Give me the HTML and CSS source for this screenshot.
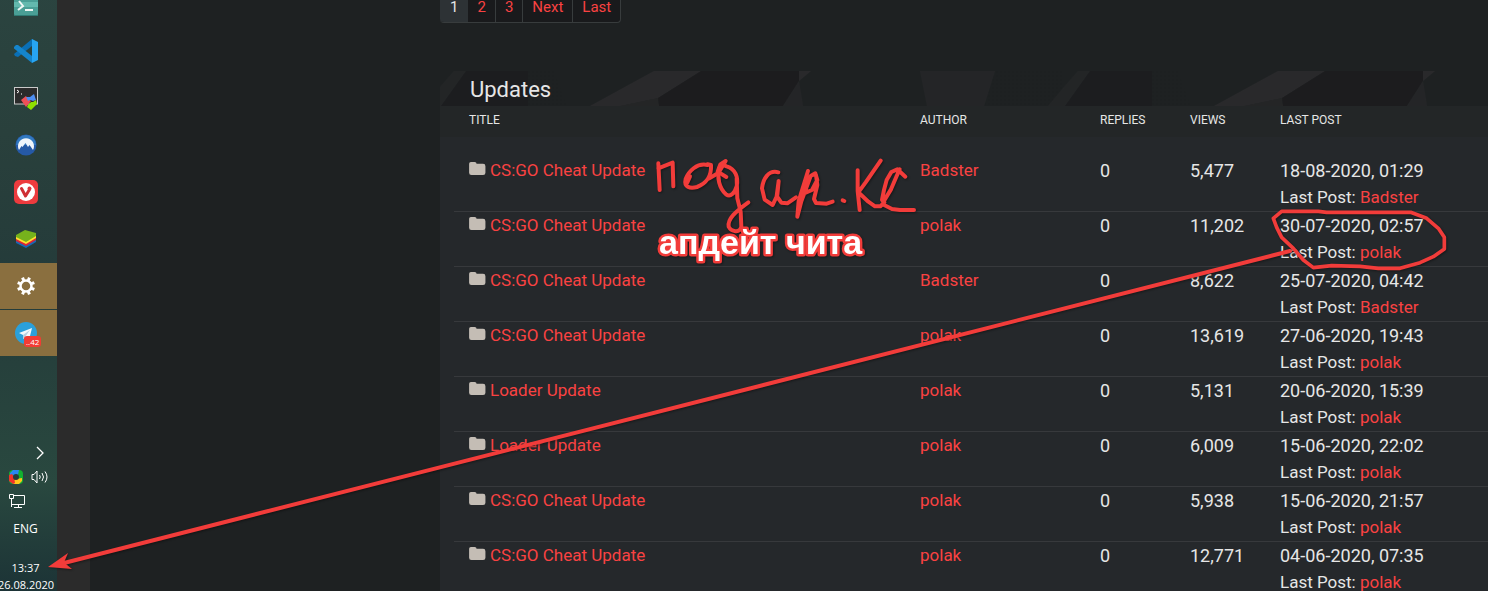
FILE: index.html
```html
<!DOCTYPE html>
<html lang="en">
<head>
    <meta charset="UTF-8">
    <meta name="viewport" content="width=device-width, initial-scale=1.0">
    <title>Updates</title>
    <link rel="stylesheet" href="styles.css">
</head>
<body>
    <!-- taskbar -->
    <aside class="taskbar">
        <div class="app">
            <svg width="24" height="24" viewBox="0 0 24 24"><rect width="24" height="24" rx="2" fill="#4a9f96"/><path d="M0 10h24v5H0z" fill="#63b9ae"/><path d="M0 23h24v1H0z" fill="#2f7b74"/><path d="M5 9l4 5-5 4M11 18h8" fill="none" stroke="#eef6f4" stroke-width="2"/></svg>
        </div>
        <div class="app">
            <svg width="24" height="24" viewBox="0 0 24 24"><path d="M18 0v7L4 18 1 17 0 15z" fill="#0a6fb5"/><path d="M0 8l2-2 2 0 14 11v7L0 9.500z" fill="#1585cc"/><path d="M18 0l6 3v18l-6 3z" fill="#27a5f3"/></svg>
        </div>
        <div class="app">
            <svg width="24" height="24" viewBox="0 0 24 24"><rect x=".5" y="1.500" width="23" height="16.500" fill="#2b2b2b" stroke="#c9c9c9"/><path d="M3 4l2 1.500L3 7M7 8h1" stroke="#fff" fill="none"/><path d="M7 14l5-4 2 3 3 2-5 6z" fill="#ee4f57"/><path d="M12 11l4 0 4-3 2 6-3 1-3-1-2 1z" fill="#4d8df0"/><path d="M14 19l3-3 2 0 3-2 1 4-6 6-4-3z" fill="#8fe000"/></svg>
        </div>
        <div class="app">
            <svg width="22" height="22" viewBox="0 0 22 22"><circle cx="11" cy="11" r="10.500" fill="#2559a6"/><path d="M1 11a10 10 0 0 1 20 0z" fill="#3279c0"/><path d="M4 16A8 8 0 1 1 18 16l-3.500-5-1.500 2-2.500-4-3 4-1-1z" fill="#eef4fb"/></svg>
        </div>
        <div class="app">
            <svg width="24" height="24" viewBox="0 0 24 24"><rect width="24" height="24" rx="5" fill="#ed3b3e"/><circle cx="12" cy="12" r="9" fill="#fff"/><path d="M7.500 8.500l4 7.500 4-6.500" fill="none" stroke="#cf2f35" stroke-width="3" stroke-linecap="round" stroke-linejoin="round"/><circle cx="15.500" cy="8.500" r="2" fill="#d9383d"/></svg>
        </div>
        <div class="app">
            <svg width="22" height="20" viewBox="0 0 22 20"><path d="M1 11v3l10 5 10-6v-3z" fill="#1768b5"/><path d="M1 9v3l10 5 10-6V8z" fill="#dc2436"/><path d="M1 7v3l10 5 10-6V6z" fill="#ffe02e"/><path d="M1 6l9-5 11 3v3l-10 6L1 8z" fill="#76b21c"/></svg>
        </div>
        <div class="app active">
            <svg width="20" height="20" viewBox="0 0 20 20"><circle cx="10" cy="10" r="5.500" fill="none" stroke="#fff" stroke-width="2.500"/><g stroke="#fff" stroke-width="3"><path d="M10 1v3M10 16v3M1 10h3M16 10h3" transform="rotate(22.500 10 10)"/><path d="M10 1v3M10 16v3M1 10h3M16 10h3" transform="rotate(67.500 10 10)"/></g></svg>
        </div>
        <div class="app active">
            <svg width="22" height="22" viewBox="0 0 22 22"><circle cx="11" cy="11" r="11" fill="#2ba0da"/><path d="M4 11l13-5-3 12-4-3-2 2v-4z" fill="#f4f8fb"/><path d="M8 13l7-5-5 7-2 2z" fill="#b8d0e0"/></svg>
            <span class="badge">..42</span>
        </div>

        <!-- tray and clock -->
        <div class="tray">
            <div class="tray-row right">
                <svg width="8" height="14" viewBox="0 0 8 14"><path d="M1 1l6 6-6 6" fill="none" stroke="#fff" stroke-width="1.300"/></svg>
            </div>
            <div class="tray-row">
                <svg width="14" height="14" viewBox="0 0 14 14"><rect width="14" height="14" rx="4" fill="#12b030"/><path d="M7 5L1 6V3l3-3h6l-1 5z" fill="#2a86f0"/><path d="M7 9l6-1v3l-3 3H4l1-4z" fill="#ffc51b"/><path d="M5 7l1 6-2 1-4-3V5l3-1z" fill="#f0322a"/><circle cx="7" cy="7" r="3" fill="#263b3a"/></svg>
                <svg width="17" height="14" viewBox="0 0 17 14"><path d="M1 4.500h2L6 1v12L3 9.500H1zM8.500 5q1.500 2 0 4M11 3q3 4 0 8M14 1.500q4 5.500 0 11" fill="none" stroke="#fff"/></svg>
            </div>
            <div class="tray-row">
                <svg width="16" height="14" viewBox="0 0 16 14"><path d="M5 1.500h10.500v9H2.500V6M9.500 10v3M5 13.500h8M.5.500h4v4h-4zM2.500 4v9" fill="none" stroke="#fff"/></svg>
            </div>
            <div class="lang">ENG</div>
            <div class="clock">13:37<br>26.08.2020</div>
        </div>
    </aside>
    <div class="window-edge"></div>

    <!-- forum page -->
    <main class="page">
        <nav class="pagination">
            <span class="current">1</span>
            <a href="#">2</a>
            <a href="#">3</a>
            <a href="#">Next</a>
            <a href="#">Last</a>
        </nav>

        <section class="panel">
            <header class="panel-title">
                <svg class="panel-art" width="100%" height="35">
                    <defs>
                        <pattern id="dots" width="4" height="4" patternUnits="userSpaceOnUse"><rect width="2" height="2" fill="#1d2021"/></pattern>
                        <pattern id="shards" width="624" height="35" patternUnits="userSpaceOnUse">
                            <path d="M88 0h26l13 35H88zM555 0h69v35h-80z" fill="url(#dots)"/>
                            <path d="M14 0h12L1 35H0V16z" fill="#232526"/>
                            <path d="M26 0h62v35H1z" fill="#1c1d1f"/>
                            <path d="M214 0h47l-43 27-38 8h-30z" fill="#29292b"/>
                            <path d="M218 27l1 8h-39z" fill="#242526"/>
                            <path d="M261 0h98v10l-16 25H219l-1-8z" fill="#1c1c1e"/>
                            <path d="M359 0h12l-12 10z" fill="#29292b"/>
                            <path d="M359 10l4 25h-20z" fill="#242527"/>
                            <path d="M480 0h75l-11 35h-57z" fill="#242527"/>
                            <path d="M624 16v19h-16z" fill="#232526"/>
                        </pattern>
                    </defs>
                    <rect width="100%" height="35" fill="url(#shards)"/>
                </svg>
                <h2>Updates</h2>
            </header>
            <div class="panel-body">
                <table class="threads">
                    <thead>
                        <tr>
                            <th class="col-title">TITLE</th>
                            <th class="col-author">AUTHOR</th>
                            <th class="col-count">REPLIES</th>
                            <th class="col-count">VIEWS</th>
                            <th>LAST POST</th>
                        </tr>
                    </thead>
                    <tbody id="threads"></tbody>
                </table>
            </div>
        </section>
    </main>

    <!-- pen marks -->
    <svg class="marks" width="1488" height="591" viewBox="0 0 1488 591">
        <path d="M1290 251L64 563" fill="none" stroke="#f23c3a" stroke-width="4" stroke-linecap="round"/>
        <path d="M48 567l20-14-4 9.500 8 6.500z" fill="#f23c3a"/>
        <svg x="1160" y="150" width="328" height="180" viewBox="0 0 984 540">
            <path d="M340 205l25-21h110l25 3h252l48 18 35 30 18 27v35l-33 23-40 18-60 17h-65l-55-6-85-2-55 6-30-23-30-35-35-33-15-30z" fill="none" stroke="#f23c3a" stroke-width="11" stroke-linejoin="round"/>
        </svg>
        <svg x="640" y="145" width="300" height="125" viewBox="0 0 900 375">
            <g fill="none" stroke="#f23c3a" stroke-width="12" stroke-linecap="round" stroke-linejoin="round">
                <path d="M55 55l4 80M55 70l43-17 2 71"/>
                <path d="M203 60c-32-8-58 20-66 42-6 24 12 30 34 24 28-10 44-34 42-66l-10-2M150 94l-8 18"/>
                <path d="M208 100l27-16 22-36-16 10-8 22 26 16"/>
                <path d="M238 68c-8 30 0 62 20 80 14 10 26-4 32-24 6-28-4-52-30-60l-10-4M290 100l2 60 10 40 2 45c-4 20-30 16-38 0-4-24 22-46 59-73"/>
                <path d="M415 82c-30-8-46 20-49 48l8 34 24 16 14-30 4-42-6 45 14 20 18 2 26-18"/>
                <path d="M504 78l-28 90-4 47 12-46 28-76 14-8 6 20-16 30-24 10M528 90l4 30-10 42 6 12 32 2 18-6M608 166l5 2"/>
                <path d="M653 76v62l6 57M722 47l-45 65-22 30 30 28 20 14 16 0 12-12"/>
                <path d="M796 95l-24-22-18 8-14 24-8 30-6 30 5 4 22-36 18-42 8-18M728 178l28 14 24 3h42"/>
            </g>
        </svg>
        <text class="caption" x="659" y="254">апдейт чита</text>
    </svg>

    <script>
        const threads = [
            ['CS:GO Cheat Update', 'Badster', '5,477', '18-08-2020, 01:29'],
            ['CS:GO Cheat Update', 'polak', '11,202', '30-07-2020, 02:57'],
            ['CS:GO Cheat Update', 'Badster', '8,622', '25-07-2020, 04:42'],
            ['CS:GO Cheat Update', 'polak', '13,619', '27-06-2020, 19:43'],
            ['Loader Update', 'polak', '5,131', '20-06-2020, 15:39'],
            ['Loader Update', 'polak', '6,009', '15-06-2020, 22:02'],
            ['CS:GO Cheat Update', 'polak', '5,938', '15-06-2020, 21:57'],
            ['CS:GO Cheat Update', 'polak', '12,771', '04-06-2020, 07:35']
        ];
        const folder = '<svg class="folder" width="17" height="14" viewBox="0 0 18 15"><path d="M2 0h4q2 0 2 2h7q2.500 0 2.500 2.500v7q0 2.500-2.500 2.500H2.500Q0 14 0 11.500V2Q0 0 2 0z" fill="#c4bdb5"/></svg>';

        document.getElementById('threads').innerHTML = threads.map(([title, author, views, date]) => `
            <tr>
                <td>${folder}<a href="#">${title}</a></td>
                <td><a href="#">${author}</a></td>
                <td><div class="num">0</div></td>
                <td><div class="num">${views}</div></td>
                <td><div class="num">${date}</div>Last Post: <a href="#">${author}</a></td>
            </tr>`).join('');
    </script>
</body>
</html>
```
FILE: styles.css
```css
* {
    box-sizing: border-box;
}
body {
    margin: 0;
    height: 100vh;
    display: flex;
    overflow: hidden;
    position: relative;
    background-color: #1e2122;
    color: #e6e6e6;
    font-family: Roboto, "Liberation Sans", sans-serif;
}
a {
    color: #f94242;
    text-decoration: none;
}

/* taskbar */
.taskbar {
    flex: none;
    width: 57px;
    height: calc(100vh + 21px);
    display: flex;
    flex-direction: column;
    gap: 1px;
    margin-top: -19px;
    background: linear-gradient(#2b4440, #29403c 25%, #243b3a 50%, #29483f 82%, #1c3336);
    color: #fff;
    font-family: "Open Sans", "Noto Sans", sans-serif;
}
.app {
    flex: none;
    height: 46px;
    padding-right: 5px;
    display: flex;
    align-items: center;
    justify-content: center;
    position: relative;
}
.app.active {
    background-color: #8a6f3f;
}
.badge {
    position: absolute;
    left: 24px;
    bottom: 9px;
    padding: 0 2px;
    border-radius: 3px;
    background-color: #f23c34;
    font-size: 8px;
    line-height: 11px;
}
.tray {
    margin-top: auto;
    text-align: center;
}
.tray-row {
    height: 24px;
    padding: 0 8px 0 9px;
    display: flex;
    align-items: center;
    gap: 8px;
}
.tray-row.right {
    justify-content: flex-end;
    padding-right: 13px;
}
.lang {
    padding: 4px 6px 18px 0;
    font-size: 12px;
    line-height: 24px;
}
.clock {
    margin: 0 4px 0 -2px;
    font-size: 11px;
    line-height: 17px;
}
.window-edge {
    flex: none;
    width: 33px;
    background-color: #2b2b2b;
}

/* forum */
.page {
    flex: 1;
    padding-left: 350px;
}
.pagination {
    display: flex;
    width: fit-content;
    margin: -9px 0 48px;
    border: 1px solid #383c3d;
    border-left: 0;
    border-radius: 4px;
    overflow: hidden;
    background-color: #191a1c;
    font-size: 15px;
    line-height: 30px;
}
.pagination a,
.pagination span {
    padding: 0 9px;
    border-right: 1px solid #383c3d;
}
.pagination a:last-child {
    border-right: 0;
}
.pagination .current {
    padding: 0 10px;
    border-right: 0;
    background-color: #2d3235;
}
.panel-title {
    position: relative;
    height: 35px;
    padding-left: 30px;
}
.panel-title h2 {
    position: relative;
    margin: 0;
    font-size: 22px;
    font-weight: 400;
    line-height: 37px;
}
.panel-art {
    position: absolute;
    left: 0;
    top: 0;
}
.panel-body {
    padding-left: 14px;
    background: linear-gradient(#232627 31px, #25282b 31px);
}
.threads {
    width: 100%;
    table-layout: fixed;
    border-collapse: separate;
    border-spacing: 0;
}
.threads th {
    height: 31px;
    padding: 0 15px;
    font-size: 12px;
    font-weight: 400;
    line-height: 28px;
    text-align: left;
    vertical-align: top;
}
.threads tbody::before {
    content: "";
    display: block;
    height: 20px;
}
.threads td {
    height: 55px;
    padding: 0 15px;
    border-bottom: 1px solid #37393c;
    font-size: 17px;
    line-height: 27px;
    vertical-align: top;
    white-space: nowrap;
}
.threads .num {
    font-size: 18px;
}
.col-title {
    width: 451px;
}
.col-author {
    width: 180px;
}
.col-count {
    width: 90px;
}
.folder {
    margin-right: 4px;
}

.marks {
    position: absolute;
    left: 0;
    top: 0;
    pointer-events: none;
    filter: drop-shadow(1px 1px 1px rgba(0, 0, 0, 0.4));
}
.caption {
    font: bold 34px "Liberation Sans", Arial, sans-serif;
    fill: #fff;
    stroke: #f23c3a;
    stroke-width: 5px;
    stroke-linejoin: round;
    paint-order: stroke;
}
```
